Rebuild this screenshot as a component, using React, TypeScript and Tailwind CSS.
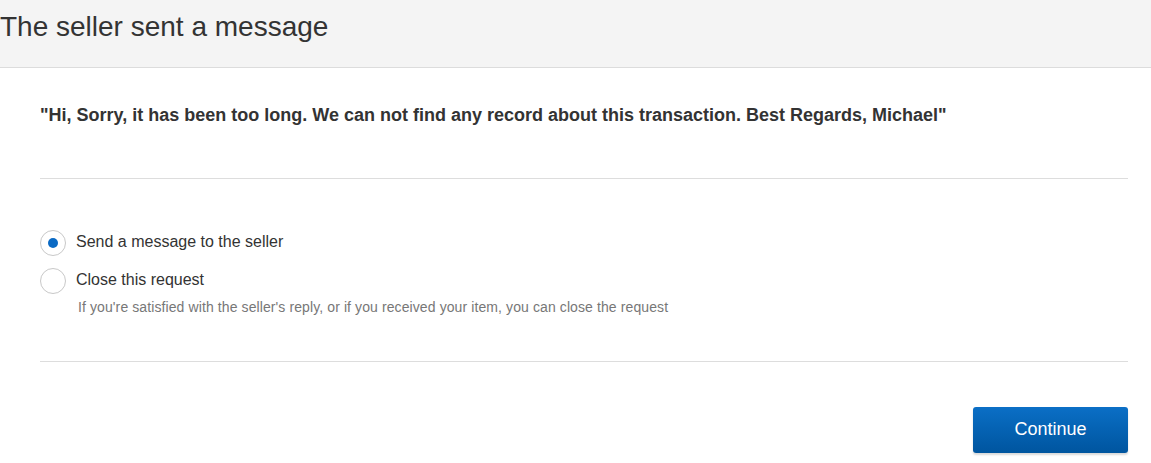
import React from 'react';

export default function App() {
  return (
    <div className="w-[1151px] h-[463px] bg-white overflow-hidden" style={{ fontFamily: '"Liberation Sans", Arial, sans-serif' }}>
      {/* Header */}
      <div className="h-[68px] bg-[#f4f4f4] border-b border-[#dcdcdc] flex items-center">
        <h1 className="text-[28px] text-[#333] -mt-[13px] font-normal leading-[32px]">The seller sent a message</h1>
      </div>

      <div className="px-[40px] pr-[23px]">
        <p className="text-[18px] font-bold text-[#333] pt-[36px] pb-[52px] leading-[22px]">
          "Hi, Sorry, it has been too long. We can not find any record about this transaction. Best Regards, Michael"
        </p>
        <div className="border-t border-[#dddddd]" />

        <div className="pt-[51px] pb-[45px] flex flex-col">
          <label className="flex items-center gap-[10px] h-[26px]">
            <span className="w-[26px] h-[26px] rounded-full border border-[#c8c8c8] flex items-center justify-center">
              <span className="w-[10px] h-[10px] rounded-full bg-[#0b6ac4]" />
            </span>
            <span className="text-[16px] text-[#333] -mt-[2px]">Send a message to the seller</span>
          </label>
          <label className="flex items-center gap-[10px] h-[26px] mt-[12px]">
            <span className="w-[26px] h-[26px] rounded-full border border-[#c8c8c8]" />
            <span className="text-[16px] text-[#333] -mt-[2px]">Close this request</span>
          </label>
          <p className="text-[14px] tracking-[0.1px] text-[#777] ml-[38px] mt-[5px] leading-[17px]">
            If you're satisfied with the seller's reply, or if you received your item, you can close the request
          </p>
        </div>
        <div className="border-t border-[#dddddd]" />

        <div className="flex justify-end pt-[45px]">
          <button className="w-[155px] h-[46px] rounded-[3px] text-white text-[18px] pb-[2px] bg-gradient-to-b from-[#0b6fc6] to-[#00559f] shadow-[0_2px_2px_rgba(0,0,0,0.15)]">
            Continue
          </button>
        </div>
      </div>
    </div>
  );
}
